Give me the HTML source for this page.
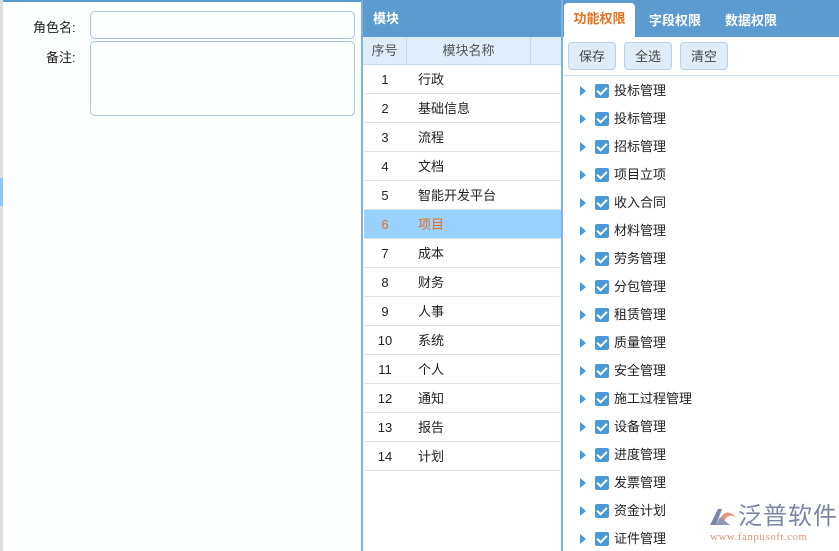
<!DOCTYPE html><html><head><meta charset="utf-8"><style>
*{margin:0;padding:0;box-sizing:border-box}
body{width:839px;height:551px;overflow:hidden;background:#fff;font-family:"Liberation Sans","Noto Sans CJK SC",sans-serif;font-size:13px;color:#222;position:relative}
.abs{position:absolute}
.inp{position:absolute;left:90px;width:265px;border:1px solid #a7c8e5;border-radius:5px}
.hdr{background:#5b9bcf;color:#fff;font-weight:bold}
.row{position:absolute;left:364px;width:197px;height:29px;border-bottom:1px solid #e3e3e3;line-height:30px}
.row span{position:absolute}
.row .n{left:0;width:42px;text-align:center}
.row .t{left:54px}
.ti{position:absolute;left:580px;height:20px;line-height:22px}
.ti .ar{position:absolute;left:0;top:6px;width:0;height:0;border-left:6px solid #4a9ad8;border-top:5px solid transparent;border-bottom:5px solid transparent}
.ti .cb{position:absolute;left:15px;top:4px;width:14px;height:14px;background:#4a9ad8;border-radius:2px}
.ti .cb:after{content:"";position:absolute;left:4px;top:1px;width:4px;height:8px;border:solid #fff;border-width:0 2px 2px 0;transform:rotate(45deg)}
.ti .tx{position:absolute;left:34px;white-space:nowrap}
.btn{position:absolute;top:42px;height:28px;border:1px solid #b8d4ec;background:#e0edf9;border-radius:4px;color:#444;text-align:center;line-height:28px;font-size:13px}
</style></head><body>
<div class="abs" style="left:0;top:0;width:839px;height:2px;background:#5b9bcf"></div>
<div class="abs" style="left:0;top:0;width:3px;height:551px;background:#ddd"></div>
<div class="abs" style="left:0;top:178px;width:3px;height:28px;background:#8fc6f5"></div>
<div class="abs" style="left:3px;top:2px;width:358px;height:549px;background:#fdfefe"></div>
<div class="abs" style="top:17px;left:33px">角色名:</div>
<div class="abs" style="top:47px;left:46px">备注:</div>
<div class="inp" style="top:11px;height:28px"></div>
<div class="inp" style="top:41px;height:75px"></div>
<div class="abs" style="left:361px;top:0;width:2px;height:551px;background:#7db3e2"></div>
<div class="abs hdr" style="left:363px;top:0;width:198px;height:37px;line-height:38px;padding-left:10px">模块</div>
<div class="abs" style="left:363px;top:37px;width:198px;height:28px;background:#dfedfa;border-bottom:1px solid #c5dcef;color:#555;line-height:28px">
<span class="abs" style="left:0;width:43px;text-align:center">序号</span>
<span class="abs" style="left:43px;top:0;height:28px;border-left:1px solid #c5dcef;width:125px;border-right:1px solid #c5dcef;text-align:center">模块名称</span></div>
<div class="row" style="top:65px"><span class="n">1</span><span class="t">行政</span></div>
<div class="row" style="top:94px"><span class="n">2</span><span class="t">基础信息</span></div>
<div class="row" style="top:123px"><span class="n">3</span><span class="t">流程</span></div>
<div class="row" style="top:152px"><span class="n">4</span><span class="t">文档</span></div>
<div class="row" style="top:181px"><span class="n">5</span><span class="t">智能开发平台</span></div>
<div class="row" style="top:210px;background:#99d1ff;color:#e8701c"><span class="n">6</span><span class="t">项目</span></div>
<div class="row" style="top:239px"><span class="n">7</span><span class="t">成本</span></div>
<div class="row" style="top:268px"><span class="n">8</span><span class="t">财务</span></div>
<div class="row" style="top:297px"><span class="n">9</span><span class="t">人事</span></div>
<div class="row" style="top:326px"><span class="n">10</span><span class="t">系统</span></div>
<div class="row" style="top:355px"><span class="n">11</span><span class="t">个人</span></div>
<div class="row" style="top:384px"><span class="n">12</span><span class="t">通知</span></div>
<div class="row" style="top:413px"><span class="n">13</span><span class="t">报告</span></div>
<div class="row" style="top:442px"><span class="n">14</span><span class="t">计划</span></div>
<div class="abs" style="left:561px;top:0;width:2px;height:551px;background:#7db3e2"></div>
<div class="abs hdr" style="left:563px;top:0;width:276px;height:37px"></div>
<div class="abs" style="left:564px;top:3px;width:71px;height:35px;background:#fff;border-radius:4px 4px 0 0;color:#e8701c;font-weight:bold;text-align:center;line-height:32px">功能权限</div>
<div class="abs" style="left:649px;top:10px;color:#fff;font-weight:bold">字段权限</div>
<div class="abs" style="left:725px;top:10px;color:#fff;font-weight:bold">数据权限</div>
<div class="btn" style="left:568px;width:48px">保存</div>
<div class="btn" style="left:624px;width:48px">全选</div>
<div class="btn" style="left:680px;width:48px">清空</div>
<div class="abs" style="left:563px;top:75px;width:276px;height:1px;background:#cfe0ef"></div>
<div class="ti" style="top:80px"><i class="ar"></i><i class="cb"></i><span class="tx">投标管理</span></div>
<div class="ti" style="top:108px"><i class="ar"></i><i class="cb"></i><span class="tx">投标管理</span></div>
<div class="ti" style="top:136px"><i class="ar"></i><i class="cb"></i><span class="tx">招标管理</span></div>
<div class="ti" style="top:164px"><i class="ar"></i><i class="cb"></i><span class="tx">项目立项</span></div>
<div class="ti" style="top:192px"><i class="ar"></i><i class="cb"></i><span class="tx">收入合同</span></div>
<div class="ti" style="top:220px"><i class="ar"></i><i class="cb"></i><span class="tx">材料管理</span></div>
<div class="ti" style="top:248px"><i class="ar"></i><i class="cb"></i><span class="tx">劳务管理</span></div>
<div class="ti" style="top:276px"><i class="ar"></i><i class="cb"></i><span class="tx">分包管理</span></div>
<div class="ti" style="top:304px"><i class="ar"></i><i class="cb"></i><span class="tx">租赁管理</span></div>
<div class="ti" style="top:332px"><i class="ar"></i><i class="cb"></i><span class="tx">质量管理</span></div>
<div class="ti" style="top:360px"><i class="ar"></i><i class="cb"></i><span class="tx">安全管理</span></div>
<div class="ti" style="top:388px"><i class="ar"></i><i class="cb"></i><span class="tx">施工过程管理</span></div>
<div class="ti" style="top:416px"><i class="ar"></i><i class="cb"></i><span class="tx">设备管理</span></div>
<div class="ti" style="top:444px"><i class="ar"></i><i class="cb"></i><span class="tx">进度管理</span></div>
<div class="ti" style="top:472px"><i class="ar"></i><i class="cb"></i><span class="tx">发票管理</span></div>
<div class="ti" style="top:500px"><i class="ar"></i><i class="cb"></i><span class="tx">资金计划</span></div>
<div class="ti" style="top:528px"><i class="ar"></i><i class="cb"></i><span class="tx">证件管理</span></div>
<svg class="abs" style="left:708px;top:505px" width="30" height="24" viewBox="0 0 30 24"><path d="M2 20 L10 4 L14 4 L8 20Z" fill="#7b86a6"/><path d="M12 14 Q18 2 28 12 Q20 8 16 16Z" fill="#e0977a"/><path d="M8 20 L12 12 L22 20Z" fill="#8f98b4"/></svg>
<div class="abs" style="left:738px;top:503px;font-size:24px;color:#7b86a6;letter-spacing:1px;line-height:28px">泛普软件</div>
<div class="abs" style="left:710px;top:531px;font-size:11px;color:#e0977a;font-family:'Liberation Serif',serif;letter-spacing:0.5px">www.fanpusoft.com</div>
</body></html>
